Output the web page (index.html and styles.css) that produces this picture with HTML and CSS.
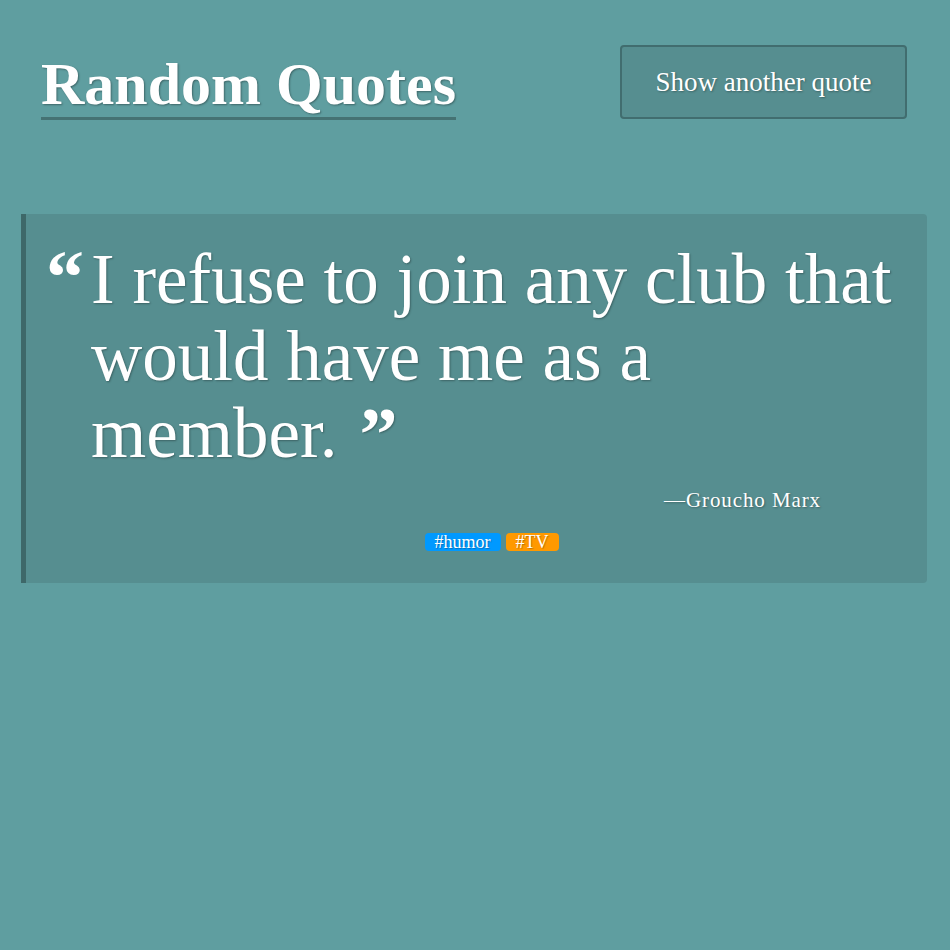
FILE: index.html
```html
<!DOCTYPE html>
<html>
<head>
<meta charset="utf-8">
<link rel="stylesheet" href="styles.css">
</head>
<body>
<header class="top">
  <h1 class="title">Random Quotes</h1>
  <button class="next">Show another quote</button>
</header>
<main class="card">
  <blockquote class="quote">
    <span class="mark open">&ldquo;</span>
    <p class="text">I refuse to join any club that would have me as a member.<span class="mark close">&rdquo;</span></p>
  </blockquote>
  <p class="author">&mdash;Groucho Marx</p>
  <div class="tags">
    <span class="tag humor">#humor</span>
    <span class="tag tv">#TV</span>
  </div>
</main>
</body>
</html>
```
FILE: styles.css
```css
html, body {
  margin: 0;
  padding: 0;
  background: #5f9ea0;
  color: #fff;
  font-family: "Liberation Serif", "DejaVu Serif", serif;
}
.top {
  display: flex;
  justify-content: space-between;
  align-items: flex-start;
  padding: 45px 43px 0 41px;
}
.title {
  margin: 7px 0 0;
  font-size: 60px;
  line-height: 64px;
  font-weight: bold;
  border-bottom: 3px solid #457273;
  text-shadow: 1px 1px 2px rgba(0,0,0,0.35);
  padding-bottom: 1px;
}
.next {
  width: 287px;
  height: 74px;
  background: #568e90;
  border: 2px solid #416d6f;
  border-radius: 4px;
  color: #fff;
  font-family: inherit;
  font-size: 27px;
  text-shadow: 1px 1px 2px rgba(0,0,0,0.3);
}
.card {
  margin: 94px 23px 0 21px;
  background: #568e90;
  border-left: 5px solid #3e6869;
  border-radius: 0 4px 4px 0;
  padding: 27px 30px 32px 20px;
}
.quote {
  margin: 0;
  display: flex;
  align-items: flex-start;
}
.mark {
  font-family: "Liberation Serif", serif;
  font-weight: bold;
  font-size: 76px;
  line-height: 60px;
}
.open {
  width: 45px;
  flex: none;
  margin-top: 6px;
}
.close {
  display: inline-block;
  margin-left: 22px;
  vertical-align: top;
  position: relative;
  top: 9px;
}
.text {
  margin: 0;
  font-size: 71px;
  line-height: 77px;
  text-shadow: 1px 1px 2px rgba(0,0,0,0.3);
}
.author {
  margin: 16px 76px 0 0;
  text-align: right;
  font-size: 21px;
  line-height: 24px;
  letter-spacing: 0.9px;
  text-shadow: 1px 1px 2px rgba(0,0,0,0.3);
}
.tags {
  display: flex;
  justify-content: center;
  gap: 5px;
  margin-top: 21px;
  padding-left: 40px;
}
.tag {
  font-size: 18px;
  line-height: 18px;
  padding: 0 10px;
  border-radius: 4px;
  text-shadow: 1px 1px 1px rgba(0,0,0,0.25);
}
.humor { background: #0099ff; }
.tv { background: #ff9900; }
```
